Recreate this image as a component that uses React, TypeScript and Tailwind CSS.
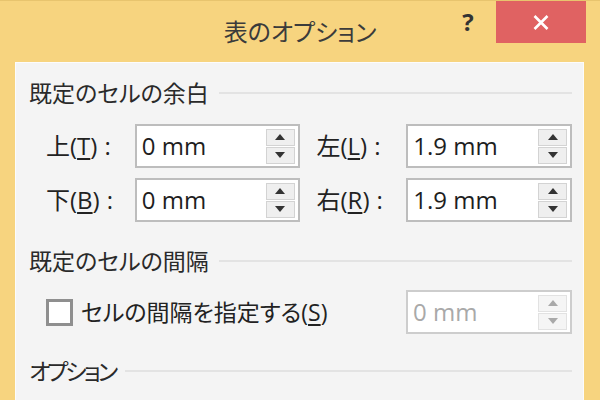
import type { ReactNode } from 'react'

const font = "font-['Open_Sans','Noto_Sans_CJK_JP',sans-serif] [font-feature-settings:'palt']"

function SectionHeader({ children, tight }: { children: ReactNode; tight?: boolean }) {
  return (
    <div className="flex h-[28px] items-center gap-[10px]">
      <span className={'text-[23px] leading-none text-[#2a2a2a] ' + (tight ? 'tracking-[-3px]' : '')}>{children}</span>
      <div className="h-[2px] flex-1 bg-[#e3e3e3]" />
    </div>
  )
}

function Arrow({ up, disabled }: { up?: boolean; disabled?: boolean }) {
  return (
    <svg width="10" height="6" viewBox="0 0 10 6" className={disabled ? 'fill-[#a9a9a9]' : 'fill-[#333]'}>
      {up ? <path d="M0 6 L5 0 L10 6 Z" /> : <path d="M0 0 L10 0 L5 6 Z" />}
    </svg>
  )
}

function Spin({ value, disabled }: { value: string; disabled?: boolean }) {
  const btn =
    'flex h-[17px] items-center justify-center border ' +
    (disabled ? 'border-[#e2e2e2] bg-[#f5f5f5]' : 'border-[#d3d3d3] bg-[#efefef]')
  return (
    <div
      className={
        'flex h-[44px] items-center border-2 bg-white pl-[5px] pr-[3px] ' +
        (disabled ? 'border-[#cdcdcd] text-[#a9a9a9]' : 'border-[#bdbdbd] text-[#1e1e1e]')
      }
    >
      <span className="flex-1 text-[24px] leading-none">{value}</span>
      <div className="flex w-[29px] flex-col gap-[1px]">
        <div className={btn}>
          <Arrow up disabled={disabled} />
        </div>
        <div className={btn}>
          <Arrow disabled={disabled} />
        </div>
      </div>
    </div>
  )
}

function Label({ ch, k, className }: { ch: string; k: string; className: string }) {
  return (
    <div className={'flex items-center text-[24px] leading-none text-[#222] ' + className}>
      {ch}(<span className="underline underline-offset-[3px]">{k}</span>)<span className="ml-[7px]">:</span>
    </div>
  )
}

function MarginRow({ a, ak, av, b, bk, bv }: { a: string; ak: string; av: string; b: string; bk: string; bv: string }) {
  return (
    <div className="flex items-center pl-[17px]">
      <Label ch={a} k={ak} className="w-[89px]" />
      <div className="w-[165px]">
        <Spin value={av} />
      </div>
      <Label ch={b} k={bk} className="ml-[17px] w-[90px]" />
      <div className="w-[166px]">
        <Spin value={bv} />
      </div>
    </div>
  )
}

export default function App() {
  return (
    <div className={'flex h-[400px] w-[600px] flex-col overflow-hidden border-t border-[#e8c46e] bg-[#f7d47f] ' + font}>
      {/* title bar */}
      <div className="grid h-[61px] grid-cols-[1fr_auto_1fr]">
        <div />
        <div className="self-center text-[24px] leading-none text-[#3b3b3b]">表のオプション</div>
        <div className="flex items-start justify-end">
          <div className="flex h-[42px] w-[56px] items-center justify-center text-[24px] font-bold leading-none text-[#333]">
            ?
          </div>
          <div className="flex h-[42px] w-[90px] items-center justify-center bg-[#e06262]">
            <svg width="16" height="15" viewBox="0 0 16 15" className="stroke-white" strokeWidth="2.6">
              <path d="M1.5 1 L14.5 14 M14.5 1 L1.5 14" />
            </svg>
          </div>
          <div className="w-[14px]" />
        </div>
      </div>

      {/* dialog body */}
      <div className="ml-[15px] mr-[16px] flex flex-1 flex-col border-x border-t border-[#fcfcfc] bg-[#f4f4f4] pl-[13px] pr-[11px] pt-[16px]">
        <SectionHeader>既定のセルの余白</SectionHeader>

        <div className="mt-[17px] flex flex-col gap-[10px]">
          <MarginRow a="上" ak="T" av="0 mm" b="左" bk="L" bv="1.9 mm" />
          <MarginRow a="下" ak="B" av="0 mm" b="右" bk="R" bv="1.9 mm" />
        </div>

        <div className="mt-[25px]">
          <SectionHeader>既定のセルの間隔</SectionHeader>
        </div>

        <div className="mt-[15px] flex items-center pl-[17px]">
          <div className="flex flex-1 items-center gap-[8px]">
            <div className="h-[27px] w-[27px] border-[3px] border-[#8f8f8f] bg-white" />
            <span className="text-[23px] leading-none text-[#222]">
              セルの間隔を指定する(<span className="underline underline-offset-[3px]">S</span>)
            </span>
          </div>
          <div className="w-[166px]">
            <Spin value="0 mm" disabled />
          </div>
        </div>

        <div className="mt-[23px]">
          <SectionHeader tight>オプション</SectionHeader>
        </div>
      </div>
    </div>
  )
}
